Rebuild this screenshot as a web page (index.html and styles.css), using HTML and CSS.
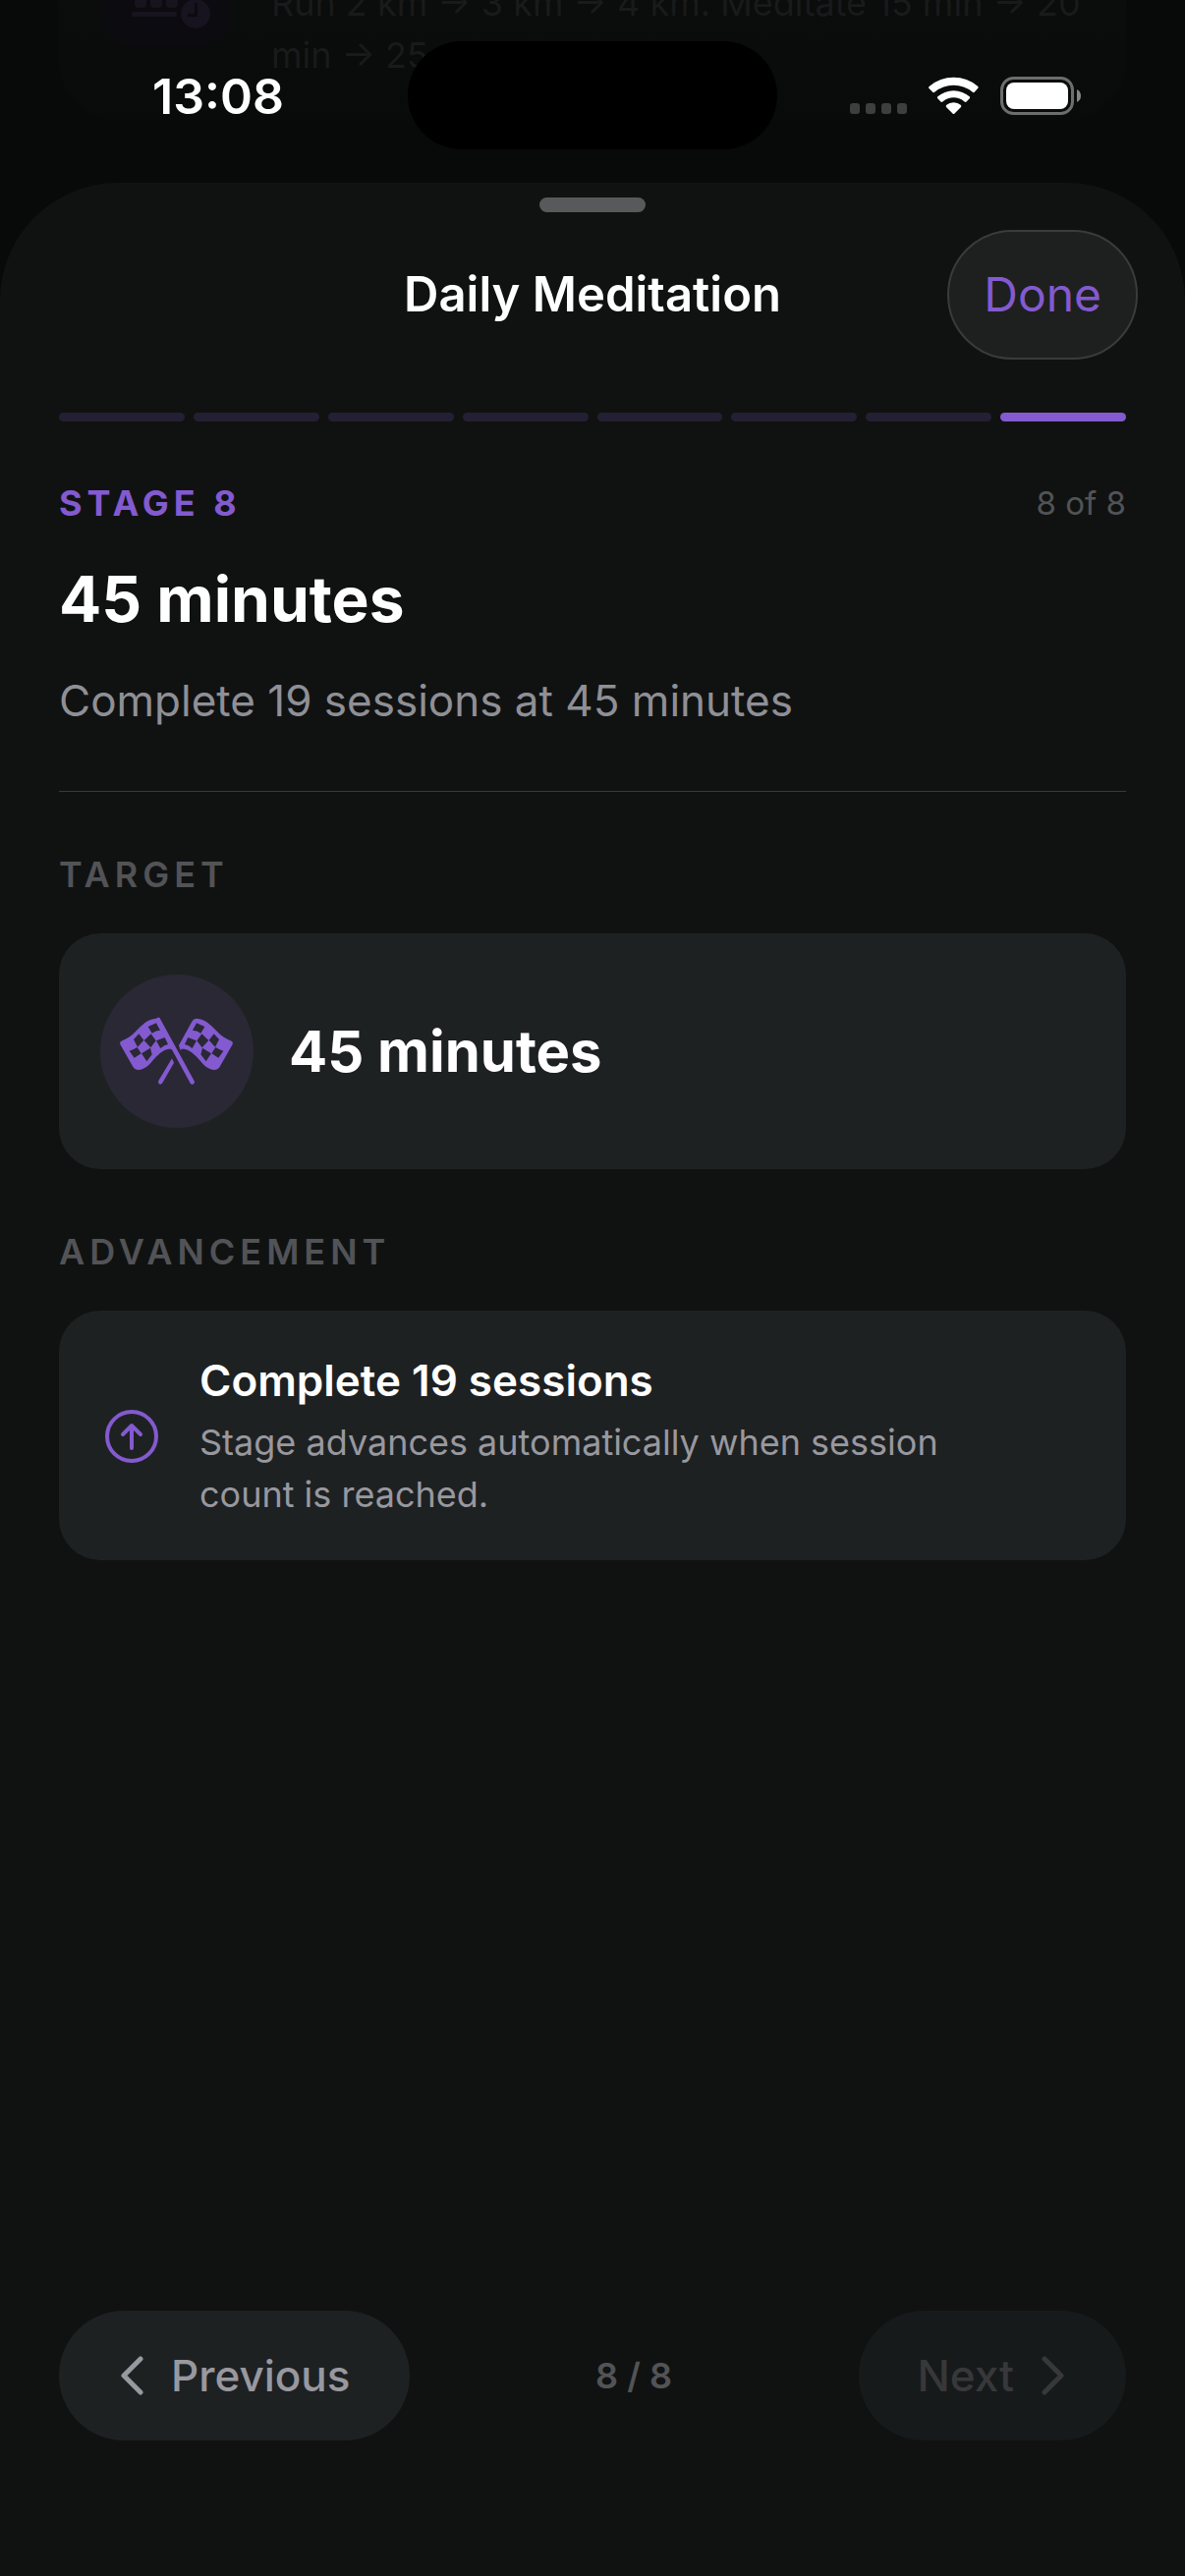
FILE: index.html
```html
<!DOCTYPE html>
<html lang="en">
<head>
  <meta charset="UTF-8" />
  <meta name="viewport" content="width=device-width,initial-scale=1" />
  <title>Daily Meditation</title>
  <link rel="stylesheet" href="styles.css">
</head>
<body>
  <div class="backdrop" aria-hidden="true">
    <div class="backdrop-card">
      <svg class="backdrop-icon" viewBox="0 0 132 132" fill="currentColor">
        <rect class="backdrop-tile" width="132" height="132" rx="30"/>
        <path d="M35 80h12v10a4 4 0 0 1-4 4h-4a4 4 0 0 1-4-4zM51 80h12v10a4 4 0 0 1-4 4h-4a4 4 0 0 1-4-4zM67 80h12v10a4 4 0 0 1-4 4h-4a4 4 0 0 1-4-4z"/>
        <rect x="32" y="98" width="46" height="5" rx="2"/>
        <path fill-rule="evenodd" d="M97 85a15 15 0 1 0 0 30 15 15 0 1 0 0-30zm-1 4h3v14h-10v-3h7z"/>
      </svg>
      <p class="backdrop-text">Run 2 km → 3 km → 4 km. Meditate 15 min → 20 min → 25</p>
    </div>
  </div>

  <header class="status">
    <span class="time">13:08</span>
    <span class="island"></span>
    <svg class="status-icons" width="236" height="40" viewBox="0 0 236 40" fill="#fff">
      <g fill="#3d3e3e">
        <rect x="0" y="28" width="10" height="11" rx="3"/>
        <rect x="16" y="28" width="10" height="11" rx="3"/>
        <rect x="32" y="28" width="10" height="11" rx="3"/>
        <rect x="48" y="28" width="10" height="11" rx="3"/>
      </g>
      <path d="M80 12.500Q80 11.500 81 10.700A38 38 0 0 1 130 10.700Q131 11.500 130.500 12.500L126.500 17Q125.500 17.500 124.500 16.500A30 30 0 0 0 86.500 16.500Q85.500 17.500 84.500 17Z"/>
      <path d="M89 21.500A25 25 0 0 1 122 21.500Q122.500 22.500 121.500 23.500L118 27Q117 27 116 26A17 17 0 0 0 95 26Q94 27 93 27L89.500 23.500Q88.500 22.500 89 21.500Z"/>
      <path d="M98 30A12 12 0 0 1 113 30Q113.500 31 113 32L106.500 38.500Q105.500 39.500 104.500 38.500L98 32Q97.500 31 98 30Z"/>
      <rect x="154.500" y="2.500" width="72" height="36" rx="12" fill="none" stroke="#6c6d6d" stroke-width="3"/>
      <rect x="159" y="7" width="63" height="27" rx="8"/>
      <path d="M231 14q4 2 4 6.500t-4 6.500z" fill="#858686"/>
    </svg>
  </header>

  <main class="sheet">
    <div class="grabber"></div>
    <div class="titlebar">
      <h1>Daily Meditation</h1>
      <button class="done" type="button">Done</button>
    </div>

    <div class="progress">
      <i></i><i></i><i></i><i></i><i></i><i></i><i></i><i class="on"></i>
    </div>

    <section class="stage">
      <div class="stage-row">
        <span class="stage-label">STAGE 8</span>
        <span class="stage-count">8 of 8</span>
      </div>
      <h2>45 minutes</h2>
      <p>Complete 19 sessions at 45 minutes</p>
    </section>

    <section class="block">
      <h3>TARGET</h3>
      <div class="card target">
        <svg class="flags" viewBox="6 6 468 468" fill="currentColor">
          <defs>
            <path id="flag" fill-rule="evenodd" d="M176 140C152 142 134 158 116 178C102 193 88 203 70 209Q64 212 67 219L105 286Q112 299 126 297C150 293 160 275 178 256C194 240 206 232 223 233L226 238L231 222L190 148Q185 139 176 140Z
              M152 165L177 154L189 176Q176 176 164 185Z
              M108 204L124 187L139 206L120 227Z
              M161 187L176 208L160 229L140 207Z
              M177 208L203 198L213 219Q202 220 190 231Z
              M95 239Q108 235 119 228L131 247L110 260Z
              M132 247L159 230L164 250L148 271Z"/>
          </defs>
          <use href="#flag"/>
          <use href="#flag" transform="matrix(-1 0 0 1 477 0)"/>
          <path d="M183 144L287 334" fill="none" stroke="currentColor" stroke-width="14" stroke-linecap="round"/>
          <path d="M184 330L225 262L231 275L196 337Q191 343 186 340Q181 336 184 330Z"/>
        </svg>
        <strong>45 minutes</strong>
      </div>
    </section>

    <section class="block">
      <h3>ADVANCEMENT</h3>
      <div class="card advance">
        <svg class="up" viewBox="0 0 54 54" fill="none" stroke="currentColor" stroke-width="4" stroke-linecap="round" stroke-linejoin="round">
          <circle cx="27" cy="27" r="25"/>
          <path d="M27 39V16M18 25l9-9 9 9"/>
        </svg>
        <div>
          <h4>Complete 19 sessions</h4>
          <p>Stage advances automatically when session count is reached.</p>
        </div>
      </div>
    </section>

    <nav class="pager">
      <button class="pill" type="button">
        <svg class="chevron" viewBox="0 0 28 40"><path d="M23 3L6 20l17 17"/></svg>
        Previous
      </button>
      <span class="page">8 / 8</span>
      <button class="pill" type="button" disabled>
        Next
        <svg class="chevron" viewBox="0 0 28 40"><path d="M5 3l17 17L5 37"/></svg>
      </button>
    </nav>
  </main>
</body>
</html>
```

FILE: styles.css
```css
*{box-sizing:border-box}
body{margin:0;min-height:100vh;display:flex;flex-direction:column;position:relative;
     font-family:Inter,"Liberation Sans",sans-serif;background:#080909;color:#fff}
h1,h2,h3,h4,p{margin:0}
button{font-family:inherit;border:none;cursor:pointer}
svg{flex:none;display:block}

/* dimmed page behind the sheet */
.backdrop{position:absolute;top:0;left:0;right:0;height:186px;padding:0 60px;overflow:hidden}
.backdrop-card{height:122px;padding:0 42px;display:flex;gap:42px;
     background:linear-gradient(#0b0c0c,#090a0a);border-radius:0 0 60px 60px}
.backdrop-icon{width:132px;height:132px;margin-top:-86px;color:#17131f}
.backdrop-tile{fill:#0c0b10}
.backdrop-text{flex:1;margin-top:-23px;font-size:36px;line-height:53px;color:#191a1a}

.status{position:relative;height:186px;padding:10px 105px 0 155px;display:flex;
     justify-content:space-between;align-items:flex-start}
.time{margin-top:57px;font-size:50px;line-height:62px;font-weight:600}
.status-icons{margin-top:67px}
.island{position:absolute;top:42px;left:50%;width:376px;height:110px;margin-left:-188px;
     border-radius:55px;background:#000}

.sheet{position:relative;flex:1;display:flex;flex-direction:column;padding:15px 60px 138px;
     background:#101211;border-radius:120px 120px 0 0}
.grabber{width:108px;height:15px;margin:0 auto 18px;border-radius:8px;background:#58595a}
.titlebar{display:grid;grid-template-columns:1fr auto 1fr;align-items:center;margin:0 -12px}
.titlebar h1{grid-column:2;font-size:49px;line-height:60px;font-weight:600}
.done{justify-self:end;height:132px;padding:0 35px 2px;border:2px solid #383c3c;border-radius:66px;
     background:#1e201f;color:#835acf;font-size:48px}

.progress{display:flex;gap:9px;margin-top:54px}
.progress i{flex:1;height:9px;border-radius:5px;background:#251f33}
.progress .on{background:#835acf}

.stage{margin-top:60px;padding-bottom:64px;border-bottom:1px solid #373939}
.stage-row{display:flex;justify-content:space-between;align-items:center;line-height:46px}
.stage-label{font-size:36px;font-weight:700;letter-spacing:5px;color:#835acf}
.stage-count{font-size:33px;color:#525357}
.stage h2{margin-top:36px;font-size:64px;line-height:78px;font-weight:700}
.stage p{margin-top:36px;font-size:44px;line-height:56px;color:#8f8f96}

.block{margin-top:60px}
.block h3{font-size:36px;line-height:48px;font-weight:600;letter-spacing:5px;color:#525357}
.card{display:flex;align-items:center;margin-top:36px;padding:42px;border-radius:42px;background:#1e2122}
.flags{width:156px;height:156px;border-radius:50%;background:#2a2835;color:#835acf}
.target strong{margin-left:36px;font-size:58px;line-height:72px;font-weight:700}
.advance{gap:42px;padding:42px 120px 40px 47px}
.up{width:54px;height:54px;color:#835acf}
.advance h4{font-size:44px;line-height:58px;font-weight:600}
.advance p{margin-top:8px;font-size:36px;line-height:53px;color:#98989f}

.pager{display:flex;justify-content:space-between;align-items:center;margin-top:auto}
.pill{display:flex;align-items:center;gap:26px;height:132px;padding:0 60px;border-radius:66px;
     background:#1e2122;color:#98989f;font-size:44px;font-weight:500}
.pill:disabled{background:#171a1b;color:#373839;cursor:default}
.chevron{width:28px;height:40px;fill:none;stroke:currentColor;stroke-width:5;
     stroke-linecap:round;stroke-linejoin:round}
.page{font-size:36px;font-weight:600;color:#525357}
```
